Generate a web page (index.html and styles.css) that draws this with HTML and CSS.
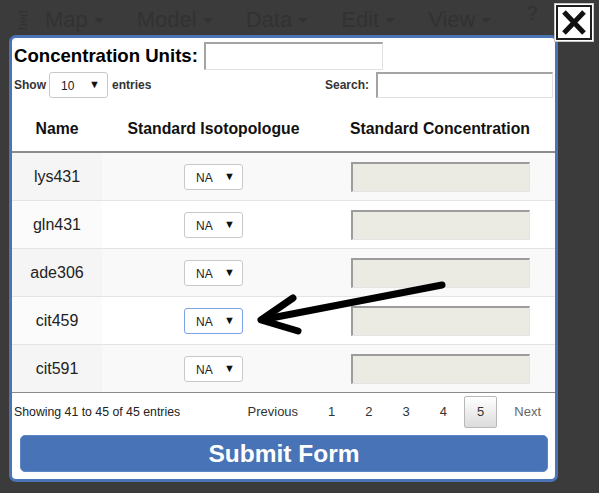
FILE: index.html
```html
<!DOCTYPE html>
<html lang="en">
<head>
    <meta charset="UTF-8">
    <meta name="viewport" content="width=device-width, initial-scale=1.0">
    <title>Standard Concentrations</title>
    <link rel="stylesheet" href="styles.css">
</head>
<body>
    <!-- app menu behind the modal -->
    <nav class="menubar">
        <span class="side-label">bed</span>
        <span class="menu-item">Map <span class="caret"></span></span>
        <span class="menu-item">Model <span class="caret"></span></span>
        <span class="menu-item">Data <span class="caret"></span></span>
        <span class="menu-item">Edit <span class="caret"></span></span>
        <span class="menu-item">View <span class="caret"></span></span>
        <span class="menu-help">?</span>
    </nav>

    <div class="dialog">
        <div class="units-row">
            <label for="units">Concentration Units:</label>
            <input type="text" id="units" class="units-input">
        </div>

        <div class="table-controls">
            <div class="length-control">
                <span>Show</span>
                <div class="select-box length-select"><span>10</span><span class="select-arrow">&#9660;</span></div>
                <span>entries</span>
            </div>
            <div class="search-control">
                <span>Search:</span>
                <input type="text" class="search-input">
            </div>
        </div>

        <table class="conc-table">
            <thead>
                <tr>
                    <th class="col-name">Name</th>
                    <th class="col-iso">Standard Isotopologue</th>
                    <th class="col-conc">Standard Concentration</th>
                </tr>
            </thead>
            <tbody>
                <tr class="odd">
                    <td class="sorted">lys431</td>
                    <td><div class="select-box"><span>NA</span><span class="select-arrow">&#9660;</span></div></td>
                    <td><input type="text" class="conc-input" disabled></td>
                </tr>
                <tr class="even">
                    <td class="sorted">gln431</td>
                    <td><div class="select-box"><span>NA</span><span class="select-arrow">&#9660;</span></div></td>
                    <td><input type="text" class="conc-input" disabled></td>
                </tr>
                <tr class="odd">
                    <td class="sorted">ade306</td>
                    <td><div class="select-box"><span>NA</span><span class="select-arrow">&#9660;</span></div></td>
                    <td><input type="text" class="conc-input" disabled></td>
                </tr>
                <tr class="even">
                    <td class="sorted">cit459</td>
                    <td><div class="select-box focused"><span>NA</span><span class="select-arrow">&#9660;</span></div></td>
                    <td><input type="text" class="conc-input" disabled></td>
                </tr>
                <tr class="odd">
                    <td class="sorted">cit591</td>
                    <td><div class="select-box"><span>NA</span><span class="select-arrow">&#9660;</span></div></td>
                    <td><input type="text" class="conc-input" disabled></td>
                </tr>
            </tbody>
        </table>

        <div class="table-footer">
            <div class="table-info">Showing 41 to 45 of 45 entries</div>
            <div class="pagination">
                <span class="page-btn">Previous</span>
                <span class="page-btn">1</span>
                <span class="page-btn">2</span>
                <span class="page-btn">3</span>
                <span class="page-btn">4</span>
                <span class="page-btn current">5</span>
                <span class="page-btn disabled">Next</span>
            </div>
        </div>

        <button type="button" class="submit-btn">Submit Form</button>
    </div>

    <!-- close box sits outside the dialog corner -->
    <svg class="close-btn" width="40" height="39" viewBox="0 0 40 39">
        <rect x="0.5" y="0.5" width="39" height="38" fill="#fff" stroke="#c8c8c8" stroke-width="1"/>
        <rect x="3" y="3" width="34" height="33" fill="#fff" stroke="#1e1e1e" stroke-width="2"/>
        <path d="M10 9 L30 30 M30 9 L10 30" stroke="#111" stroke-width="5" fill="none"/>
    </svg>

    <!-- annotation arrow drawn over the table -->
    <svg class="pointer-arrow" width="599" height="493" viewBox="0 0 599 493">
        <path d="M442 285 L266 319" stroke="#000" stroke-width="7" stroke-linecap="round" fill="none"/>
        <path d="M293 298 L261 320 L298 331" stroke="#000" stroke-width="7" stroke-linecap="round" stroke-linejoin="round" fill="none"/>
    </svg>
</body>
</html>
```

FILE: styles.css
```css
body {
    margin: 0;
    width: 599px;
    height: 493px;
    overflow: hidden;
    background-color: #3b3b3b;
    font-family: "Liberation Sans", Arial, sans-serif;
    color: #333;
}

/* background menu bar */
.menubar {
    display: flex;
    align-items: center;
    height: 40px;
    padding-left: 16px;
    gap: 33px;
    color: #323232;
    font-size: 22px;
}

.side-label {
    writing-mode: vertical-rl;
    transform: rotate(180deg);
    font-size: 12px;
    width: 12px;
    margin-right: -16px;
}

.menu-item {
    display: flex;
    align-items: center;
}

.caret {
    display: inline-block;
    margin-left: 6px;
    border-left: 5px solid transparent;
    border-right: 5px solid transparent;
    border-top: 5px solid #323232;
}

.menu-help {
    margin-left: 2px;
    margin-top: -14px;
    font-size: 20px;
}

/* modal */
.dialog {
    position: absolute;
    left: 9px;
    top: 35px;
    width: 549px;
    box-sizing: border-box;
    border: 3px solid #4a74b5;
    border-radius: 7px;
    background-color: #fff;
    padding: 4px 0 7px;
}

.units-row {
    display: flex;
    align-items: center;
    height: 28px;
    padding-left: 2px;
}

.units-row label {
    font-size: 18.6px;
    font-weight: bold;
    color: #000;
}

.units-input {
    margin: 0 0 0 6px;
    width: 179px;
    height: 28px;
    box-sizing: border-box;
    border-style: solid;
    border-width: 2px 1px 1px 2px;
    border-color: #a4a4a4 #e2e2e2 #e2e2e2 #a4a4a4;
    padding: 0;
}

.table-controls {
    display: flex;
    justify-content: space-between;
    align-items: center;
    height: 27px;
    margin-top: 1px;
    padding: 0 2px;
    font-size: 12px;
    font-weight: bold;
    color: #333;
}

.length-control,
.search-control {
    display: flex;
    align-items: center;
}

.length-select {
    margin: 0 4px 0 3px;
    width: 63px;
    height: 27px;
    padding: 0 8px 0 10px;
}

.search-control span {
    margin-right: 7px;
}

.search-input {
    width: 177px;
    height: 26px;
    box-sizing: border-box;
    margin: 0;
    padding: 0;
    border-style: solid;
    border-width: 2px 1px 1px 2px;
    border-color: #a4a4a4 #e2e2e2 #e2e2e2 #a4a4a4;
}

/* fake select */
.select-box {
    display: flex;
    justify-content: space-between;
    align-items: center;
    box-sizing: border-box;
    width: 59px;
    height: 26px;
    padding: 2px 7px 0 11px;
    border: 1px solid #c9c9c9;
    border-radius: 3px;
    background-color: #fff;
    font-size: 12px;
    font-weight: normal;
    color: #222;
}

.select-box .select-arrow {
    font-size: 11px;
    margin-top: -3px;
    color: #111;
}

.select-box.focused {
    border-color: #7da2e6;
}

/* data table */
.conc-table {
    width: 100%;
    border-collapse: separate;
    border-spacing: 0;
    border-bottom: 1px solid #8a8a8a;
}

.conc-table th {
    padding: 23px 0 14px;
    line-height: 16px;
    font-size: 15.8px;
    font-weight: bold;
    color: #111;
    border-bottom: 2px solid #8c8c8c;
}

.col-name {
    width: 90px;
}

.col-iso {
    width: 223px;
}

.conc-table td {
    height: 47px;
    padding: 0;
    text-align: center;
    vertical-align: middle;
    border-top: 1px solid #e4e4e4;
    font-size: 16px;
    color: #222;
}

.conc-table tbody tr:first-child td {
    border-top: none;
}

.conc-table tr.odd td {
    background-color: #f9f9f9;
}

.conc-table tr.odd td.sorted {
    background-color: #f5f5f5;
}

.conc-table tr.even td.sorted {
    background-color: #fbfbfb;
}

.conc-table .select-box {
    margin: 0 auto;
}

.conc-input {
    display: block;
    margin: 0 auto;
    width: 179px;
    height: 30px;
    box-sizing: border-box;
    padding: 0;
    background-color: #ebebe4;
    border-style: solid;
    border-width: 2px 1px 1px 2px;
    border-color: #9c9c9c #e4e4e4 #e4e4e4 #9c9c9c;
}

/* footer */
.table-footer {
    display: flex;
    justify-content: space-between;
    align-items: center;
    margin-top: 3px;
    padding-left: 2px;
    padding-right: 1px;
}

.table-info {
    font-size: 12.3px;
    color: #222;
}

.pagination {
    display: flex;
}

.page-btn {
    display: block;
    height: 32px;
    line-height: 30px;
    box-sizing: border-box;
    padding: 0 12px;
    margin-left: 4px;
    border: 1px solid transparent;
    border-radius: 2px;
    font-size: 13px;
    color: #333;
}

.page-btn.current {
    border-color: #b8b8b8;
    background: linear-gradient(to bottom, #fff 0%, #dcdcdc 100%);
}

.page-btn.disabled {
    color: #666;
}

.submit-btn {
    display: block;
    margin: 7px 7px 0 8px;
    width: 528px;
    height: 37px;
    border: 1px solid #5e86c5;
    border-radius: 5px;
    background-color: #4873b6;
    color: #fff;
    font-family: "Liberation Sans", Arial, sans-serif;
    font-size: 24.5px;
    font-weight: bold;
    padding: 0;
}

.close-btn {
    position: absolute;
    left: 554px;
    top: 3px;
}

.pointer-arrow {
    position: absolute;
    left: 0;
    top: 0;
    pointer-events: none;
}
```
